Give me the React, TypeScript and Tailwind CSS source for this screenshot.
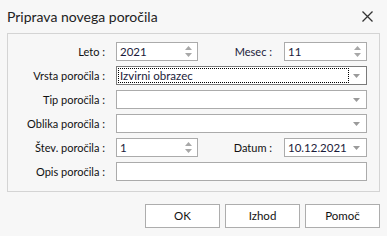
import React from 'react'

const font = { fontFamily: 'Lato, "Open Sans", sans-serif' }

function Spin() {
  return (
    <div className="flex flex-col items-center gap-[3px] pr-[5px]">
      <svg width="7" height="4" viewBox="0 0 7 4"><path d="M3.5 0L7 4H0z" fill="#a8a8a8" /></svg>
      <svg width="7" height="4" viewBox="0 0 7 4"><path d="M0 0h7L3.5 4z" fill="#a8a8a8" /></svg>
    </div>
  )
}

function Arrow() {
  return (
    <div className="pr-[6px] flex items-center">
      <svg width="7" height="4" viewBox="0 0 7 4"><path d="M0 0h7L3.5 4z" fill="#9a9a9a" /></svg>
    </div>
  )
}

function Field({ value, kind, focused, w }: { value?: string; kind: 'spin' | 'drop' | 'text'; focused?: boolean; w: string }) {
  return (
    <div className={`${w} h-[19px] flex items-center bg-white border ${focused ? 'border-[#7a7a7a]' : 'border-[#ababab]'}`}>
      {focused ? (
        <div className="flex-1 ml-[1px] mr-[4px] h-[15px] border border-dotted border-black flex items-center px-[1px] text-[11.5px] text-[#1b1b3a] leading-none whitespace-nowrap">
          {value}
        </div>
      ) : (
        <div className="flex-1 pl-[3px] text-[11.5px] text-[#1b1b3a] leading-none whitespace-nowrap">{value}</div>
      )}
      {kind === 'spin' && <Spin />}
      {kind === 'drop' && <Arrow />}
    </div>
  )
}

function Label({ children }: { children: React.ReactNode }) {
  return <div className="w-[97px] text-right text-[11px] text-[#111] leading-none whitespace-nowrap">{children}</div>
}

export default function App() {
  return (
    <div className="w-[387px] h-[236px] bg-[#f7f7f7] overflow-hidden" style={font}>
      <div className="h-[33px] flex items-center justify-between pl-[7px] pr-[14px]">
        <span className="text-[14px] text-[#222] leading-none">Priprava novega poročila</span>
        <svg width="11" height="11" viewBox="0 0 11 11"><path d="M0.5 0.5L10.5 10.5M10.5 0.5L0.5 10.5" stroke="#333" strokeWidth="1.3" /></svg>
      </div>
      <div className="mx-[7px] h-[159px] border border-[#d4d4d4] pt-[8px] flex flex-col gap-[5px]">
        <div className="flex items-center">
          <Label>Leto :</Label>
          <div className="ml-[11px]"><Field value="2021" kind="spin" w="w-[82px]" /></div>
          <div className="w-[74px] text-right text-[11px] text-[#1b1b3a] leading-none">Mesec :</div>
          <div className="ml-[12px]"><Field value="11" kind="spin" w="w-[83px]" /></div>
        </div>
        <div className="flex items-center">
          <Label>Vrsta poročila :</Label>
          <div className="ml-[11px]"><Field value="Izvirni obrazec" kind="drop" focused w="w-[251px]" /></div>
        </div>
        <div className="flex items-center">
          <Label>Tip poročila :</Label>
          <div className="ml-[11px]"><Field kind="drop" w="w-[251px]" /></div>
        </div>
        <div className="flex items-center">
          <Label>Oblika poročila :</Label>
          <div className="ml-[11px]"><Field kind="drop" w="w-[251px]" /></div>
        </div>
        <div className="flex items-center">
          <Label>Štev. poročila :</Label>
          <div className="ml-[11px]"><Field value="1" kind="spin" w="w-[82px]" /></div>
          <div className="w-[74px] text-right text-[11px] text-[#111] leading-none">Datum :</div>
          <div className="ml-[12px]"><Field value="10.12.2021" kind="drop" w="w-[83px]" /></div>
        </div>
        <div className="flex items-center">
          <Label>Opis poročila :</Label>
          <div className="ml-[11px]"><Field kind="text" w="w-[251px]" /></div>
        </div>
      </div>
      <div className="flex justify-end gap-[5px] pr-[7px] mt-[12px]">
        {['OK', 'Izhod', 'Pomoč'].map(t => (
          <div key={t} className="w-[75px] h-[24px] flex items-center justify-center bg-white border border-[#adadad] text-[11.5px] text-[#111]">
            {t}
          </div>
        ))}
      </div>
    </div>
  )
}
